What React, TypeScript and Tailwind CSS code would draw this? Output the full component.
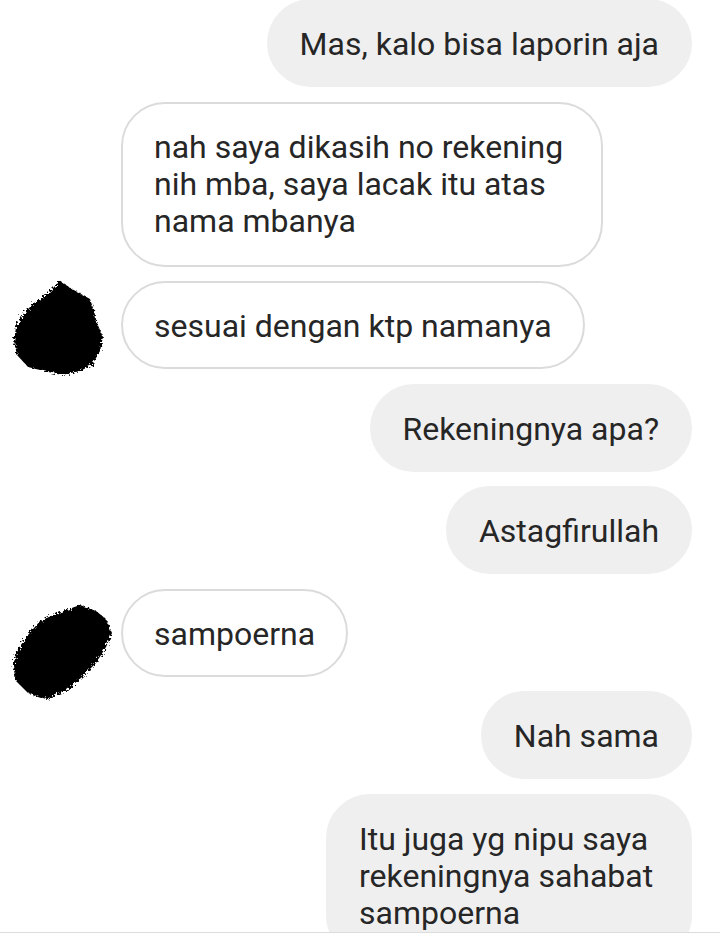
import React from 'react';

type Msg = {
  from: 'me' | 'them';
  lines: string[];
  width?: string;
  avatar?: 1 | 2;
};

const messages: Msg[] = [
  { from: 'me', lines: ['Mas, kalo bisa laporin aja'] },
  { from: 'them', lines: ['nah saya dikasih no rekening', 'nih mba, saya lacak itu atas', 'nama mbanya'], width: 'w-[482px] pb-[25px]' },
  { from: 'them', lines: ['sesuai dengan ktp namanya'], avatar: 1 },
  { from: 'me', lines: ['Rekeningnya apa?'] },
  { from: 'me', lines: ['Astagfirullah'] },
  { from: 'them', lines: ['sampoerna'], avatar: 2 },
  { from: 'me', lines: ['Nah sama'] },
  { from: 'me', lines: ['Itu juga yg nipu saya', 'rekeningnya sahabat', 'sampoerna'], width: 'w-[366px] pb-[25px]' },
];

function Blob({ kind }: { kind: 1 | 2 }) {
  // scribbled-out profile picture
  const d =
    kind === 1
      ? 'M60 0 L72 8 L90 18 L94 30 L97 42 L103 56 L100 70 L92 84 L80 90 L62 94 L44 90 L28 86 L17 74 L14 60 L16 46 L24 32 L34 22 L46 14 Z'
      : 'M80 0 L96 6 L106 14 L112 28 L106 42 L96 58 L82 72 L66 86 L46 94 L28 88 L16 76 L13 60 L18 44 L28 30 L40 16 L58 8 Z';
  return (
    <svg width="121" height="100" viewBox="0 0 121 100" className="overflow-visible">
      <defs>
        <filter id={`rough${kind}`} x="-20%" y="-20%" width="140%" height="140%">
          <feTurbulence type="fractalNoise" baseFrequency="0.45" numOctaves="2" seed={kind * 3} />
          <feDisplacementMap in="SourceGraphic" scale="7" />
          <feGaussianBlur stdDeviation="0.7" />
        </filter>
      </defs>
      <path d={d} fill="#050303" filter={`url(#rough${kind})`} />
    </svg>
  );
}

function Bubble({ msg }: { msg: Msg }) {
  const base =
    'rounded-[44px] border-2 px-[31px] pt-[25px] pb-[22px] text-[32px] leading-[37px] text-[#262626] whitespace-nowrap';
  const look =
    msg.from === 'me' ? 'bg-[#efefef] border-[#efefef]' : 'bg-white border-[#dbdbdb]';
  return (
    <div className={`${base} ${look} ${msg.width ?? ''}`}>
      {msg.lines.map((l, i) => (
        <div key={i}>{l}</div>
      ))}
    </div>
  );
}

export default function App() {
  return (
    <div className="w-[720px] h-[940px] bg-white" style={{ fontFamily: 'Roboto, "Noto Sans", sans-serif' }}>
      <div className="h-[933px] overflow-hidden border-b border-[#dcdcdc]">
        <div className="flex flex-col gap-[14.5px] mt-[-1px]">
          {messages.map((m, i) =>
            m.from === 'me' ? (
              <div key={i} className="flex justify-end pr-[28px]">
                <Bubble msg={m} />
              </div>
            ) : (
              <div key={i} className="flex items-start">
                <div className="w-[121px] h-[88px] shrink-0 relative">
                  {m.avatar === 1 && (
                    <div className="absolute left-0 top-[0px]">
                      <Blob kind={1} />
                    </div>
                  )}
                  {m.avatar === 2 && (
                    <div className="absolute left-0 top-[16px]">
                      <Blob kind={2} />
                    </div>
                  )}
                </div>
                <Bubble msg={m} />
              </div>
            )
          )}
        </div>
      </div>
    </div>
  );
}
